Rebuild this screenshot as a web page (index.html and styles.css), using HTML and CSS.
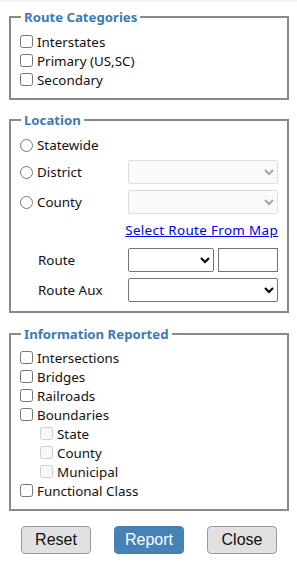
FILE: index.html
```html
<!DOCTYPE html>
<html lang="en">
<head>
  <meta charset="UTF-8" />
  <title>Route Report</title>
  <link rel="stylesheet" href="styles.css">
</head>
<body>
  <div class="topbar"></div>
  <form id="reportForm" class="report-form">
    <fieldset class="group categories">
      <legend>Route Categories</legend>
      <label class="check"><input type="checkbox" name="interstates" /> Interstates</label>
      <label class="check"><input type="checkbox" name="primary" /> Primary (US,SC)</label>
      <label class="check"><input type="checkbox" name="secondary" /> Secondary</label>
    </fieldset>

    <fieldset class="group location">
      <legend>Location</legend>
      <label class="check"><input type="radio" name="loc" value="state" /> Statewide</label>
      <div class="loc-row district">
        <label class="check"><input type="radio" name="loc" value="district" /> District</label>
        <select disabled><option></option></select>
      </div>
      <div class="loc-row">
        <label class="check"><input type="radio" name="loc" value="county" /> County</label>
        <select disabled><option></option></select>
      </div>
      <div class="map-link"><a href="#">Select Route From Map</a></div>
      <div class="loc-row route">
        <span class="field-label">Route</span>
        <div class="route-pair">
          <select><option></option></select>
          <input type="text" />
        </div>
      </div>
      <div class="loc-row">
        <span class="field-label">Route Aux</span>
        <select><option></option></select>
      </div>
    </fieldset>

    <fieldset class="group info">
      <legend>Information Reported</legend>
      <label class="check"><input type="checkbox" /> Intersections</label>
      <label class="check"><input type="checkbox" /> Bridges</label>
      <label class="check"><input type="checkbox" /> Railroads</label>
      <label class="check"><input type="checkbox" /> Boundaries</label>
      <label class="check sub"><input type="checkbox" disabled /> State</label>
      <label class="check sub"><input type="checkbox" disabled /> County</label>
      <label class="check sub"><input type="checkbox" disabled /> Municipal</label>
      <label class="check"><input type="checkbox" /> Functional Class</label>
    </fieldset>

    <div class="actions">
      <button type="reset">Reset</button>
      <button type="submit" class="primary">Report</button>
      <button type="button">Close</button>
    </div>
  </form>
</body>
</html>
```

FILE: styles.css
```css
:root {
  --legend: #3d7ab5;
  --line: #8a8a8a;
  --accent: #4682b4;
}

body {
  margin: 0;
  font-family: 'Noto Sans', 'Open Sans', sans-serif;
  font-size: 13.4px;
  color: #111;
  background: #fff;
}

.topbar {
  height: 2px;
  background: #f3f3f3;
}

.report-form {
  padding: 6px 8px 0 9px;
}

.group {
  margin: 0 0 11px;
  padding: 6px 9px 9px 9px;
  border: 2px solid var(--line);
}

legend {
  padding: 0 3px;
  margin-left: 1px;
  color: var(--legend);
  font-weight: bold;
  font-size: 13.2px;
  line-height: 18px;
}

.check {
  display: flex;
  align-items: center;
  height: 19px;
}

.check input {
  margin: 0 4px 0 0;
  width: 13px;
  height: 13px;
}

.check.sub {
  margin-left: 20px;
}

/* location block */
.location {
  padding-top: 4px;
  margin-bottom: 12px;
}

.location .check {
  height: 24px;
}

.info {
  padding-top: 5px;
}

.loc-row {
  display: flex;
  align-items: center;
  justify-content: space-between;
  margin-top: 6px;
}

.loc-row.district {
  margin-top: 3px;
}

.loc-row.route {
  margin-top: 8px;
}

.loc-row select {
  width: 150px;
  height: 24px;
  font: inherit;
}

.route-pair {
  display: flex;
  gap: 4px;
  width: 150px;
}

.route-pair select {
  width: 86px;
}

.route-pair input {
  width: 60px;
  height: 24px;
  box-sizing: border-box;
  border: 1px solid #767676;
  padding: 0 2px;
}

.field-label {
  padding-left: 18px;
}

.map-link {
  text-align: right;
  margin-top: 7px;
  height: 19px;
  line-height: 19px;
}

.map-link a {
  color: #0000ee;
  letter-spacing: 0.35px;
}

.actions {
  display: flex;
  justify-content: center;
  gap: 23px;
  margin-top: 15px;
}

.actions button {
  width: 70px;
  height: 28px;
  font-family: 'Liberation Sans', Arial, sans-serif;
  font-size: 16px;
  background: #e1e1e1;
  color: #111;
  border: 1px solid #9a9a9a;
  border-radius: 4px;
  cursor: pointer;
}

.actions button.primary {
  background: var(--accent);
  border-color: var(--accent);
  color: #fff;
}
```
